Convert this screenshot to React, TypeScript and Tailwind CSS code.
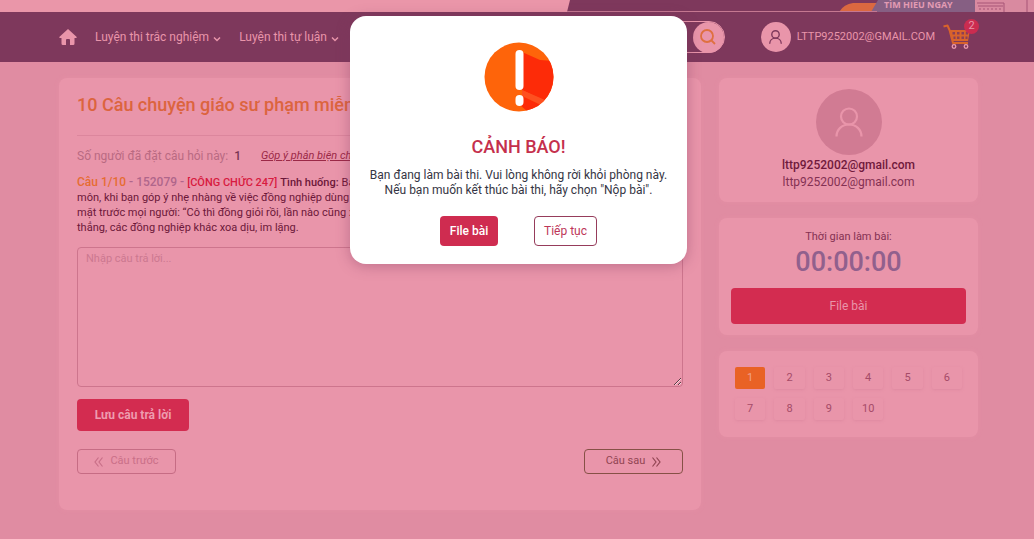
import type { ReactNode } from "react";

const QUESTION_COUNT = 10;

function UserIcon({ className, strokeWidth }: { className: string; strokeWidth: number }) {
  return (
    <svg
      viewBox="0 0 28 30"
      fill="none"
      stroke="currentColor"
      strokeWidth={strokeWidth}
      className={className}
      aria-hidden="true"
    >
      <circle cx="14" cy="9.5" r="8" />
      <path d="M1.5 29.5C1.5 22.5 7 17.5 14 17.5S26.5 22.5 26.5 29.5" />
    </svg>
  );
}

function ChevronDown() {
  return (
    <svg viewBox="0 0 8 6" fill="none" stroke="currentColor" strokeWidth="1.5" className="mt-1 h-[6px] w-2" aria-hidden="true">
      <path d="M1 1.5L4 4.5L7 1.5" />
    </svg>
  );
}

function DoubleChevron({ direction }: { direction: "left" | "right" }) {
  return (
    <svg
      viewBox="0 0 10 10"
      fill="none"
      stroke="currentColor"
      strokeWidth="1.2"
      className={direction === "left" ? "size-[10px] rotate-180" : "size-[10px]"}
      aria-hidden="true"
    >
      <path d="M1.5 0.5L5 5L1.5 9.5M5.5 0.5L9 5L5.5 9.5" />
    </svg>
  );
}

function CartIcon() {
  return (
    <svg viewBox="0 0 28 26" className="h-[26px] w-7" aria-hidden="true">
      <path d="M0.5 2.5L4.5 1.5L6.5 6L10 19H25" fill="none" stroke="#d9632b" strokeWidth="2" strokeLinejoin="round" />
      <path d="M6.5 6H27L25 17H9.5Z" fill="#d9632b" />
      <path
        d="M9.5 8h2.5v2.5h-2.5zM14 8h2.5v2.5h-2.5zM18.5 8h2.5v2.5h-2.5zM22.8 8h2.2v2.5h-2.2zM10.5 12.5h2v2.5h-2zM14 12.5h2.5v2.5h-2.5zM18.5 12.5h2.5v2.5h-2.5zM22.5 12.5h2v2.5h-2z"
        fill="#8d3f55"
      />
      <circle cx="11" cy="22.5" r="1.8" fill="#7e385c" stroke="#eb9aae" strokeWidth="1.3" />
      <circle cx="23" cy="22.5" r="1.8" fill="#7e385c" stroke="#eb9aae" strokeWidth="1.3" />
    </svg>
  );
}

function WarningIcon() {
  return (
    <svg viewBox="0 0 70 70" className="size-[70px]" aria-hidden="true">
      <clipPath id="disc">
        <circle cx="35" cy="35" r="34.5" />
      </clipPath>
      <g clipPath="url(#disc)">
        <rect width="70" height="70" fill="#fe640a" />
        <path d="M38 10L56 18L70 19V52L61 59L38 48Z" fill="#fd2b08" />
        <path d="M38 48L61 58L57 63L38 54Z" fill="#fe5020" />
        <path d="M38 54L57 63L44 70L36 63Z" fill="#fd2b08" />
      </g>
      <rect x="31.5" y="8" width="8" height="40" rx="4" fill="#fff" />
      <rect x="31.5" y="53" width="8" height="11" rx="4" fill="#fff" />
    </svg>
  );
}

function Banner() {
  return (
    <div className="flex h-3 justify-end overflow-hidden bg-[#ea96a9]">
      <svg viewBox="0 0 467 12" className="h-3 w-[467px]">
        <path d="M3 0H467V12H0Z" fill="#7e385c" />
        <path d="M272 12Q277 4 286 3H310V12Z" fill="#db6840" />
        <path d="M304 12L311 0H413L408 12Z" fill="#865f83" />
        <path d="M408 0H467V12H408Z" fill="#d98aa0" />
        <path d="M410 3H437V12M411 6H436M460 0V12" fill="none" stroke="#a75476" />
        <path d="M412 9H436" fill="none" stroke="#a75476" strokeDasharray="2 2" />
        <text x="317" y="8" fontFamily="Open Sans, sans-serif" fontSize="9" fontWeight="700" fill="#e39bb3">
          TÌM HIỂU NGAY
        </text>
        <path d="M0 11.5H310" stroke="#c57891" />
      </svg>
    </div>
  );
}

function NavBar() {
  return (
    <header className="h-[50px] bg-[#7e385c] pl-[3px] text-[#e995aa]">
      <div className="mx-auto flex h-full max-w-[919px] items-center">
        <a href="#home" aria-label="Trang chủ">
          <svg viewBox="0 0 18 16" fill="currentColor" className="h-4 w-[18px]" aria-hidden="true">
            <path d="M9 0L18 8.2L17 9H15.5V14.5Q15.5 16 14.2 16H11V11Q11 10 10 10H8Q7 10 7 11V16H3.8Q2.5 16 2.5 14.5V9H1L0 8.2Z" />
          </svg>
        </a>
        <nav className="ml-[18px] flex gap-[18px] text-xs">
          <a href="#trac-nghiem" className="flex items-center gap-1">
            Luyện thi trắc nghiệm <ChevronDown />
          </a>
          <a href="#tu-luan" className="flex items-center gap-1">
            Luyện thi tự luận <ChevronDown />
          </a>
        </nav>
        <form className="ml-auto flex h-8 w-72 items-center justify-end rounded-full border border-[#e995aa]">
          <input aria-label="Tìm kiếm" className="min-w-0 flex-1 bg-transparent px-3 text-xs outline-none" />
          <button
            type="button"
            aria-label="Tìm"
            className="flex size-[31px] items-center justify-center rounded-full bg-[#e995aa] text-[#df7040]"
          >
            <svg viewBox="0 0 16 16" fill="none" stroke="currentColor" strokeWidth="1.8" className="size-4" aria-hidden="true">
              <circle cx="7" cy="7" r="6" />
              <path d="M11.5 11.5L15 15" />
            </svg>
          </button>
        </form>
        <a href="#account" className="ml-9 flex items-center gap-[6px] text-[11px]">
          <span className="flex size-[30px] items-center justify-center rounded-full bg-[#e995aa] text-[#7e385c]">
            <UserIcon className="h-[14px] w-[13px]" strokeWidth={3} />
          </span>
          LTTP9252002@GMAIL.COM
        </a>
        <a href="#cart" aria-label="Giỏ hàng" className="relative mr-[7px] ml-2">
          <CartIcon />
          <span className="absolute -top-[5px] -right-2 flex size-[15px] items-center justify-center rounded-full bg-[#cb2c50] text-[11px]">
            2
          </span>
        </a>
      </div>
    </header>
  );
}

function Card({ className = "", children }: { className?: string; children: ReactNode }) {
  return (
    <section className={`rounded-lg bg-[#e995aa] shadow-[0_0_4px_#e48fa5] ${className}`}>{children}</section>
  );
}

function QuestionPanel() {
  return (
    <Card className="min-w-0 flex-1 px-[18px] pt-[13px] pb-9">
      <h1 className="truncate text-lg leading-7 font-medium text-[#dc643e]">
        10 Câu chuyện giáo sư phạm miễn phí
      </h1>
      <div className="mt-4 flex gap-5 border-t border-[#dc869d] pt-3 text-xs leading-4">
        <p className="text-[#b96a82]">
          Số người đã đặt câu hỏi này: <b className="ml-[3px] font-medium text-[#793452]">1</b>
        </p>
        <a href="#feedback" className="text-[11px] text-[#9b2947] italic underline">
          Góp ý phản biện chuyên môn
        </a>
      </div>
      <div className="mt-[11px] text-[11px] leading-[15px] text-[#6c1739]">
        <p className="flex h-[15px] items-center gap-[3px] whitespace-nowrap">
          <span className="text-xs leading-[15px] font-medium text-[#b0668b]">
            <span className="text-[#e66c32]">Câu 1/10</span> - 152079 -
          </span>
          <b className="font-medium text-[#d81b40]">[CÔNG CHỨC 247]</b>
          <b className="font-medium">Tình huống:</b>
          <span>Bạn và</span>
        </p>
        <p>môn, khi bạn góp ý nhẹ nhàng về việc đồng nghiệp dùng tài</p>
        <p>mặt trước mọi người: “Cô thì đồng giỏi rồi, lần nào cũng xử</p>
        <p>thẳng, các đồng nghiệp khác xoa dịu, im lặng.</p>
      </div>
      <textarea
        aria-label="Câu trả lời"
        placeholder="Nhập câu trả lời..."
        className="mt-3 block h-[140px] w-full rounded-sm border border-[#cd758d] px-2 py-1 text-[11px] leading-[14px] placeholder:text-[#cc7890]"
      />
      <button type="button" className="mt-3 h-8 w-28 rounded bg-[#d32c50] text-xs font-bold text-[#ee9caf]">
        Lưu câu trả lời
      </button>
      <div className="mt-[18px] flex justify-between text-[11px]">
        <button
          type="button"
          className="flex h-[25px] w-[99px] items-center justify-center gap-[6px] rounded border border-[#c66c84] text-[#c96f88]"
        >
          <DoubleChevron direction="left" /> Câu trước
        </button>
        <button
          type="button"
          className="flex h-[25px] w-[99px] items-center justify-center gap-[6px] rounded border border-[#865146] text-[#914452]"
        >
          Câu sau <DoubleChevron direction="right" />
        </button>
      </div>
    </Card>
  );
}

function Sidebar() {
  return (
    <aside className="flex w-[259px] shrink-0 flex-col gap-4">
      <Card className="flex h-[124px] flex-col items-center pt-[11px] text-xs leading-[17px] text-[#843153]">
        <span className="mb-[2px] flex size-[66px] items-center justify-center rounded-full bg-[#d17b93] text-[#e995aa]">
          <UserIcon className="h-[30px] w-7" strokeWidth={2.2} />
        </span>
        <b className="font-medium text-[#70193c]">lttp9252002@gmail.com</b>
        <p>lttp9252002@gmail.com</p>
      </Card>
      <Card className="h-[117px] px-3 pt-3 text-center">
        <p className="text-[11px] leading-[14px] text-[#853153]">Thời gian làm bài:</p>
        <p className="text-[27px] leading-9 font-medium text-[#91608d]">00:00:00</p>
        <button type="button" className="mt-2 h-9 w-full rounded bg-[#d32c50] text-xs text-[#e995aa]">
          File bài
        </button>
      </Card>
      <Card className="h-[86px] px-4 pt-4">
        <div className="grid grid-cols-6 gap-[9px]">
          {Array.from({ length: QUESTION_COUNT }, (_, i) => i + 1).map((n) => (
            <button
              key={n}
              type="button"
              className={
                n === 1
                  ? "h-[22px] rounded-xs bg-[#e96225] text-[11px] text-[#f0a18b]"
                  : "h-[22px] rounded-xs text-[11px] text-[#a64b68] shadow-[0_1px_3px_#df8aa1]"
              }
            >
              {n}
            </button>
          ))}
        </div>
      </Card>
    </aside>
  );
}

function WarningDialog() {
  return (
    <div className="absolute inset-0 flex items-start justify-center pt-4 pl-[3px]">
      <div
        role="dialog"
        aria-modal="true"
        aria-labelledby="warning-title"
        className="flex w-[337px] flex-col items-center rounded-2xl bg-white pt-[26px] pb-[18px] text-center shadow-[0_2px_14px_#7e385c66]"
      >
        <WarningIcon />
        <h2 id="warning-title" className="mt-5 text-lg leading-[30px] font-medium text-[#c52f4c]">
          CẢNH BÁO!
        </h2>
        <p className="mt-[6px] text-xs leading-[15px] text-[#353544]">
          Bạn đang làm bài thi. Vui lòng không rời khỏi phòng này.
          <br />
          Nếu bạn muốn kết thúc bài thi, hãy chọn "Nộp bài".
        </p>
        <div className="mt-[18px] flex gap-9 text-xs">
          <button type="button" className="h-[30px] w-[58px] rounded bg-[#cf2c50] font-medium text-white">
            File bài
          </button>
          <button type="button" className="h-[30px] w-[63px] rounded border border-[#963c5b] text-[#bd3658]">
            Tiếp tục
          </button>
        </div>
      </div>
    </div>
  );
}

export default function App() {
  return (
    <div className="relative min-h-screen bg-[#e08ca2] font-[Roboto,sans-serif]">
      <Banner />
      <NavBar />
      <main className="pt-4 pl-[3px]">
        <div className="mx-auto flex max-w-[919px] items-start gap-[18px]">
          <QuestionPanel />
          <Sidebar />
        </div>
      </main>
      <WarningDialog />
    </div>
  );
}
